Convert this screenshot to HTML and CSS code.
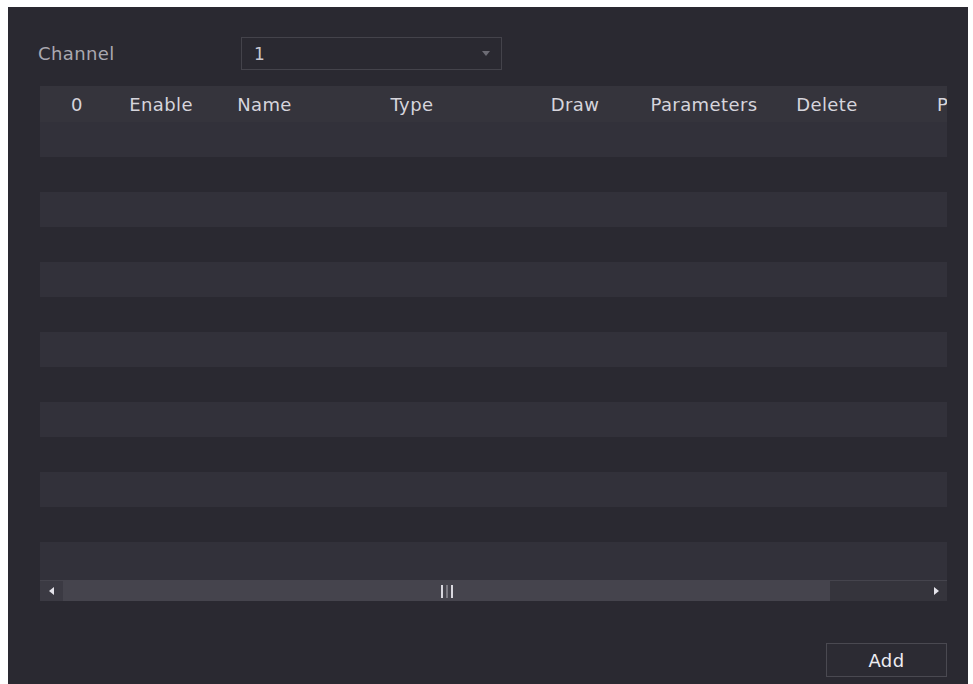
FILE: index.html
```html
<!DOCTYPE html>
<html lang="en">
<head>
    <meta charset="UTF-8">
    <meta name="viewport" content="width=device-width, initial-scale=1.0">
    <title>Channel Rules</title>
    <link rel="stylesheet" href="styles.css">
</head>
<body>
    <div class="panel">
        <div class="channel-row">
            <span class="label">Channel</span>
            <div class="select">
                <span class="select-value">1</span>
                <span class="select-arrow"></span>
            </div>
        </div>

        <div class="table-wrap">
            <div class="table">
                <div class="row head">
                    <div class="cell c-num">0</div>
                    <div class="cell c-enable">Enable</div>
                    <div class="cell c-name">Name</div>
                    <div class="cell c-type">Type</div>
                    <div class="cell c-draw">Draw</div>
                    <div class="cell c-params">Parameters</div>
                    <div class="cell c-delete">Delete</div>
                    <div class="cell c-extra">P</div>
                </div>
                <div class="body" id="rows">
                    <!-- empty rows are filled in below -->
                </div>
            </div>
            <div class="scrollbar">
                <div class="sb-btn left"><span class="tri-left"></span></div>
                <div class="sb-thumb">
                    <span class="grip bright"></span>
                    <span class="grip dim"></span>
                    <span class="grip bright"></span>
                </div>
                <div class="sb-rest"></div>
                <div class="sb-btn right"><span class="tri-right"></span></div>
            </div>
        </div>

        <div class="actions">
            <button class="btn">Add</button>
        </div>
    </div>

    <script>
        // The list is empty: draw the striped placeholder rows
        const rows = document.getElementById('rows');
        for (let i = 0; i < 13; i++) {
            const row = document.createElement('div');
            row.className = 'row ' + (i % 2 === 0 ? 'odd' : 'even');
            rows.appendChild(row);
        }
    </script>
</body>
</html>
```

FILE: styles.css
```css
* {
    margin: 0;
    padding: 0;
    box-sizing: border-box;
}

body {
    background: #ffffff;
    font-family: 'DejaVu Sans', 'Noto Sans', sans-serif;
    font-size: 18px;
    letter-spacing: 0.4px;
}

.panel {
    margin: 7px 5px 0 8px;
    height: 677px;
    background: #2a2931;
    padding: 30px 0 0 30px;
}

.channel-row {
    display: flex;
    align-items: center;
    height: 33px;
}

.label {
    width: 203px;
    color: #a9a8b0;
}

.select {
    width: 261px;
    height: 33px;
    border: 1px solid #44434b;
    display: flex;
    align-items: center;
    justify-content: space-between;
    padding: 0 11px 0 12px;
}

.select-value {
    color: #c9c8d0;
    font-size: 17px;
}

.select-arrow {
    width: 0;
    height: 0;
    border-left: 4px solid transparent;
    border-right: 4px solid transparent;
    border-top: 5px solid #6d6c75;
}

.table-wrap {
    margin: 16px 0 0 2px;
    width: 907px;
}

.table {
    overflow: hidden;
}

.row {
    display: flex;
    height: 35px;
}

.row.head {
    height: 36px;
    background: #35343c;
    align-items: center;
    color: #d6d5dc;
}

.row.odd {
    background: #32313a;
}

.row.even {
    background: #2a2931;
}

.body {
    height: 458px;
    background: #32313a;
}

.cell {
    flex: none;
    text-align: center;
    white-space: nowrap;
}

.c-num { width: 74px; }
.c-enable { width: 94px; }
.c-name { width: 113px; }
.c-type { width: 182px; }
.c-draw { width: 144px; }
.c-params { width: 114px; }
.c-delete { width: 132px; }
.c-extra { width: 54px; text-align: left; padding-left: 44px; overflow: hidden; }

.scrollbar {
    display: flex;
    height: 21px;
    background: #3a3942;
    border-top: 1px solid #45444d;
}

.sb-btn {
    width: 23px;
    display: flex;
    align-items: center;
    justify-content: center;
}

.sb-btn.left {
    background: #3b3a43;
}

.sb-btn.right {
    width: 22px;
    background: #35343c;
}

.tri-left {
    border-top: 4px solid transparent;
    border-bottom: 4px solid transparent;
    border-right: 5px solid #e4e3ea;
}

.tri-right {
    border-top: 4px solid transparent;
    border-bottom: 4px solid transparent;
    border-left: 5px solid #e4e3ea;
}

.sb-thumb {
    width: 767px;
    background: #45444d;
    display: flex;
    align-items: center;
    justify-content: center;
    gap: 3px;
}

.grip {
    width: 2px;
    height: 13px;
}

.grip.bright {
    background: #d8d7de;
}

.grip.dim {
    background: #7a7981;
}

.sb-rest {
    flex: 1;
    background: #35343c;
}

.actions {
    display: flex;
    justify-content: flex-end;
    width: 909px;
    margin-top: 42px;
}

.btn {
    width: 121px;
    height: 34px;
    background: #2c2b33;
    border: 1px solid #4a4951;
    color: #eeedf2;
    font-family: inherit;
    font-size: 18px;
    letter-spacing: 0.4px;
}
```
